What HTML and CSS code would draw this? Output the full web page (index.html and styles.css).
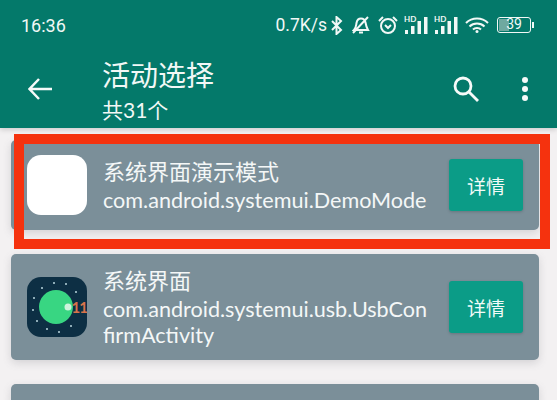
FILE: index.html
```html
<!DOCTYPE html>
<html lang="zh-CN">
<head>
  <meta charset="UTF-8" />
  <meta name="viewport" content="width=device-width, initial-scale=1.0" />
  <title>活动选择</title>
  <link rel="stylesheet" href="styles.css">
</head>
<body>
  <!-- Header with status bar and toolbar -->
  <header class="header">
    <div class="status">
      <span class="time">16:36</span>
      <div class="status-right">
        <span class="speed">0.7K/s</span>
        <svg class="ic-bt" viewBox="0 0 12 19"><path d="M1 5l9 9-4.500 4V1L10 5l-9 9" /></svg>
        <svg class="ic-bell" viewBox="0 0 18 18"><path d="M2 14c2-2 2-4 2.500-7C5 4 7 2.500 9 2.500c2.500 0 4 1.500 4.500 4 .5 3 1 5 2.500 7.500zM1 17L16 1M7 16.500h4" /></svg>
        <svg class="ic-alarm" viewBox="0 0 20 18"><circle cx="10" cy="10" r="7" /><path d="M1 5l4-4M19 5l-4-4M7 9l3 3 3-3" /></svg>
        <div class="signal">
          <span class="hd">HD</span>
          <svg viewBox="0 0 25 18"><path d="M1 14h3v4H1zM7 10h3.500v8H7zM13.500 5H17v13h-3.500zM20 1h3.500v17H20z" /></svg>
        </div>
        <div class="signal">
          <span class="hd">HD</span>
          <svg viewBox="0 0 25 18"><path d="M1 14h3v4H1zM7 10h3.500v8H7zM13.500 5H17v13h-3.500zM20 1h3.500v17H20z" /></svg>
        </div>
        <svg class="ic-wifi" viewBox="0 0 24 16"><path d="M1 6c6-6 16-6 22 0M4.500 9.500c4-4 11-4 15 0M8 12.500c2-2 6-2 8 0" /><circle class="wifi-dot" cx="12" cy="14.500" r="1.500" /></svg>
        <div class="battery">
          <div class="battery-fill"></div>
          <span class="battery-num">39</span>
        </div>
        <div class="battery-tip"></div>
      </div>
    </div>
    <div class="toolbar">
      <svg class="ic-back" viewBox="0 0 24 22"><path d="M24 11H2M11 1L1.500 11 11 21" /></svg>
      <div class="heading">
        <h1>活动选择</h1>
        <p>共31个</p>
      </div>
      <svg class="ic-search" viewBox="0 0 26 26"><circle cx="10" cy="10" r="8" /><path d="M16 16l9 9" /></svg>
      <div class="more"><i></i><i></i><i></i></div>
    </div>
  </header>

  <!-- Activity list -->
  <div class="list">
    <div class="card">
      <div class="app-icon app-icon-blank"></div>
      <div class="info">
        <h3>系统界面演示模式</h3>
        <p>com.android.systemui.DemoMode</p>
      </div>
      <button class="btn">详情</button>
    </div>

    <div class="card">
      <div class="app-icon app-icon-android">
        <svg viewBox="0 0 60 60">
          <circle cx="15" cy="11" r="1" /><circle cx="27" cy="6" r="1" /><circle cx="39" cy="7" r="1" />
          <circle cx="49" cy="15" r="1" /><circle cx="7" cy="21" r="1" /><circle cx="6" cy="33" r="1" />
          <circle cx="10" cy="44" r="1" /><circle cx="20" cy="52" r="1" /><circle cx="32" cy="55" r="1" />
          <circle cx="44" cy="49" r="1" />
          <circle class="dial" cx="29" cy="30" r="17" />
          <circle class="knob" cx="41" cy="30" r="3.500" />
        </svg>
        <span class="eleven">11</span>
      </div>
      <div class="info">
        <h3>系统界面</h3>
        <p>com.android.systemui.usb.UsbCon<br>firmActivity</p>
      </div>
      <button class="btn">详情</button>
    </div>

    <div class="card card-cut">
      <div class="info">
        <h3>系统界面</h3>
      </div>
    </div>

    <!-- Red marker drawn over the first card -->
    <div class="marker"></div>
  </div>
</body>
</html>
```

FILE: styles.css
```css
/* Global Reset & Base Styles */
* {
  margin: 0;
  padding: 0;
  box-sizing: border-box;
}
html, body {
  height: 400px;
  overflow: hidden;
}
body {
  font-family: "Lato", "Noto Sans CJK SC", sans-serif;
  background: #f3f1f2;
  color: #f4f7f7;
}

/* Header */
.header {
  height: 128px;
  background: #04796a;
  color: #f2f8f6;
  box-shadow: 0 2px 5px rgba(0, 0, 0, 0.15);
}
.status {
  display: flex;
  justify-content: space-between;
  align-items: center;
  height: 50px;
  padding: 0 23px 0 21px;
}
.time {
  font-size: 18px;
  font-family: "Roboto", sans-serif;
}
.status-right {
  display: flex;
  align-items: center;
}
.speed {
  font-size: 17.500px;
  font-family: "Roboto", sans-serif;
  margin-right: 4px;
}
.status svg {
  fill: none;
  stroke: #f2f8f6;
  stroke-width: 2;
  display: block;
}
.ic-bt {
  width: 12px;
  height: 19px;
  margin-right: 9px;
}
.ic-bell {
  width: 18px;
  height: 18px;
  margin-right: 8px;
}
.ic-alarm {
  width: 20px;
  height: 18px;
  margin-right: 6px;
}
.signal {
  position: relative;
  width: 25px;
  height: 18px;
  margin-right: 5px;
}
.status .signal svg {
  fill: #f2f8f6;
  stroke: none;
  width: 25px;
  height: 18px;
}
.hd {
  position: absolute;
  left: 0;
  top: -1px;
  font-size: 8px;
  font-weight: 700;
  line-height: 9px;
}
.ic-wifi {
  width: 24px;
  height: 16px;
  margin-left: 1px;
  margin-right: 8px;
}
.status .ic-wifi .wifi-dot {
  fill: #f2f8f6;
  stroke: none;
}
.battery {
  position: relative;
  width: 34px;
  height: 16px;
  border: 1.500px solid #f2f8f6;
  border-radius: 3px;
  text-align: center;
}
.battery-fill {
  position: absolute;
  left: 1px;
  top: 1px;
  bottom: 1px;
  width: 10px;
  background: #6fa9a0;
}
.battery-num {
  position: relative;
  display: block;
  font-size: 14px;
  line-height: 13px;
  font-family: "Roboto", sans-serif;
}
.battery-tip {
  width: 2px;
  height: 6px;
  background: #f2f8f6;
  margin-left: 1px;
}

/* Toolbar */
.toolbar {
  display: flex;
  align-items: center;
  height: 78px;
  padding-left: 28px;
}
.ic-back {
  width: 24px;
  height: 22px;
  fill: none;
  stroke: #f6faf9;
  stroke-width: 2.500;
  margin-right: 50px;
}
.heading {
  flex: 1;
  padding-top: 5px;
}
.heading h1 {
  font-size: 28px;
  font-weight: 400;
  line-height: 36px;
}
.heading p {
  font-size: 21px;
  line-height: 33px;
}
.ic-search {
  width: 26px;
  height: 26px;
  fill: none;
  stroke: #f6faf9;
  stroke-width: 2.800;
  margin-right: 43px;
}
.more {
  display: flex;
  flex-direction: column;
  gap: 3px;
  margin-right: 29px;
}
.more i {
  display: block;
  width: 6px;
  height: 6px;
  border-radius: 50%;
  background: #f6faf9;
}

/* Activity list */
.list {
  position: relative;
  padding: 12px 18px 0 11px;
}
.card {
  display: flex;
  align-items: center;
  min-height: 90px;
  margin-bottom: 24px;
  padding: 0 16px;
  background: #7b8f99;
  border-radius: 5px;
  box-shadow: 0 3px 8px rgba(90, 90, 100, 0.2);
}
.card-cut {
  align-items: flex-start;
  padding: 0 16px 0 92px;
}
.app-icon {
  position: relative;
  flex: none;
  width: 60px;
  height: 60px;
  border-radius: 14px;
  margin-right: 16px;
  overflow: hidden;
}
.app-icon-blank {
  background: #fff;
}
.app-icon-android {
  background: #0d2f44;
}
.app-icon-android svg {
  display: block;
  fill: #b8d6dc;
}
.app-icon-android .dial {
  fill: #38d682;
}
.app-icon-android .knob {
  fill: #cdf3dc;
}
.eleven {
  position: absolute;
  right: 0;
  top: 22px;
  font-size: 15px;
  line-height: 16px;
  font-weight: 700;
  letter-spacing: -1px;
  color: #d9734a;
}
.info {
  flex: 1;
  min-width: 0;
  padding: 12px 0;
}
.info h3 {
  font-size: 22px;
  font-weight: 400;
  line-height: 30px;
}
.info p {
  font-size: 21.600px;
  line-height: 26px;
}

/* Button Styles */
.btn {
  flex: none;
  width: 74px;
  height: 52px;
  margin-left: 10px;
  border: none;
  border-radius: 3px;
  background: #0b9c87;
  color: #f2fbf8;
  font-family: "Noto Sans CJK SC", sans-serif;
  font-size: 19px;
  box-shadow: 0 1px 3px rgba(0, 0, 0, 0.18);
}

/* Red marker */
.marker {
  position: absolute;
  left: 14px;
  top: 6px;
  width: 536px;
  height: 115px;
  border: 10px solid #f5320e;
}
```
